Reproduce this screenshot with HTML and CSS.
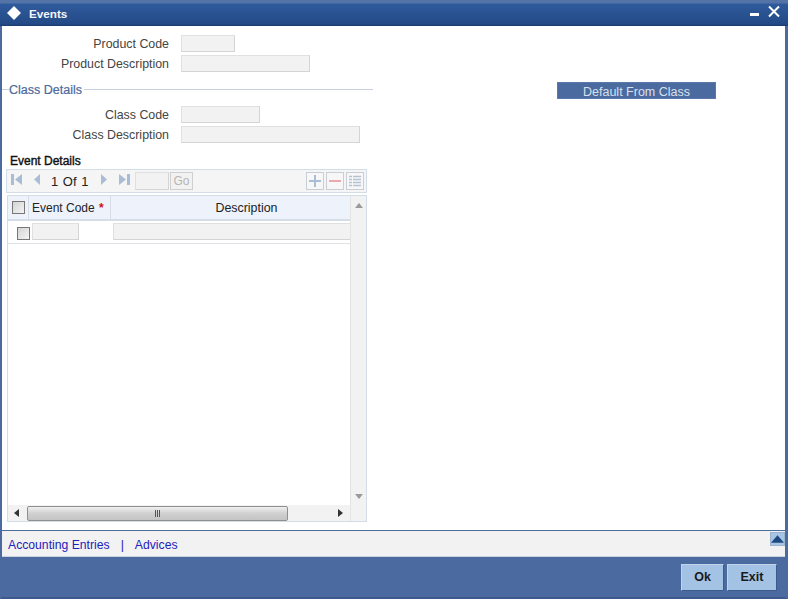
FILE: index.html
```html
<!DOCTYPE html>
<html lang="en">
<head>
<meta charset="utf-8">
<title>Events</title>
<link rel="stylesheet" href="styles.css">
</head>
<body>
<div class="window">
  <header class="titlebar">
    <svg class="logo" width="16" height="16" viewBox="0 0 16 16"><path d="M8 1 15 8 8 15 1 8Z" fill="#fff"/></svg>
    <span class="title">Events</span>
    <span class="winbtns">
      <svg width="12" height="12" viewBox="0 0 12 12"><rect x="1" y="7" width="9" height="3" fill="#fff"/></svg>
      <svg width="14" height="14" viewBox="0 0 14 14"><path d="M2 1.500 12 11.500M12 1.500 2 11.500" stroke="#fff" stroke-width="2" fill="none"/></svg>
    </span>
  </header>
  <main class="content">
    <div class="left">
      <div class="fields top">
        <div class="field"><label>Product Code</label><span class="input w54"></span></div>
        <div class="field"><label>Product Description</label><span class="input w129"></span></div>
      </div>
      <div class="legend"><span>Class Details</span></div>
      <div class="fields">
        <div class="field"><label>Class Code</label><span class="input w79"></span></div>
        <div class="field"><label>Class Description</label><span class="input w179"></span></div>
      </div>
      <h2 class="section">Event Details</h2>
      <div class="toolbar">
        <svg class="nav first" width="13" height="13" viewBox="0 0 13 13"><path d="M1 1h3v11H1zM12 1v11L5 6.500z" fill="#a9bdd6"/></svg>
        <svg class="nav prev" width="10" height="13" viewBox="0 0 10 13"><path d="M8 1v11L2 6.500z" fill="#a9bdd6"/></svg>
        <span class="pager">1 Of 1</span>
        <svg class="nav next" width="10" height="13" viewBox="0 0 10 13"><path d="M2 1v11l6-5.500z" fill="#a9bdd6"/></svg>
        <svg class="nav last" width="13" height="13" viewBox="0 0 13 13"><path d="M1 1v11l7-5.500zM9 1h3v11H9z" fill="#a9bdd6"/></svg>
        <span class="input pageinput"></span>
        <span class="go">Go</span>
        <span class="tools">
          <span class="tool"><svg width="14" height="14" viewBox="0 0 14 14"><path d="M1 7h12M7 1v12" stroke="#a9bdd6" stroke-width="2"/></svg></span>
          <span class="tool"><svg width="14" height="14" viewBox="0 0 14 14"><path d="M1 7h12" stroke="#eba9ad" stroke-width="2"/></svg></span>
          <span class="tool"><svg width="14" height="14" viewBox="0 0 14 14"><path d="M1 2.500h3M5 2.500h8M1 5.500h3M5 5.500h8M1 8.500h3M5 8.500h8M1 11.500h3M5 11.500h8" stroke="#b5c2d6" stroke-width="1.500"/></svg></span>
        </span>
      </div>
      <div class="grid">
        <div class="grid-main">
          <div class="grid-view">
            <div class="thead">
              <div class="th th-check"><span class="check"></span></div>
              <div class="th th-code">Event Code <b class="req">*</b></div>
              <div class="th th-desc">Description</div>
            </div>
            <div class="tr">
              <span class="check row"></span>
              <span class="input cellcode"></span>
              <span class="input celldesc"></span>
            </div>
          </div>
          <div class="hscroll">
            <svg width="6" height="8" viewBox="0 0 6 8"><path d="M5 0v8L0 4z" fill="#333"/></svg>
            <div class="hthumb"><i></i><i></i><i></i></div>
            <svg width="6" height="8" viewBox="0 0 6 8"><path d="M1 0v8l5-4z" fill="#333"/></svg>
          </div>
        </div>
        <div class="vscroll">
          <svg width="8" height="5" viewBox="0 0 8 5"><path d="M4 0l4 5H0z" fill="#9a9a9a"/></svg>
          <svg width="8" height="5" viewBox="0 0 8 5"><path d="M0 0h8L4 5z" fill="#9a9a9a"/></svg>
        </div>
      </div>
    </div>
    <div class="right">
      <button class="default-btn" type="button">Default From Class</button>
    </div>
  </main>
  <div class="links">
    <a>Accounting Entries</a><span class="sep">|</span><a>Advices</a>
    <span class="collapse"><svg width="14" height="8" viewBox="0 0 14 8"><path d="M7 0l7 8H0z" fill="#1c4a80"/></svg></span>
  </div>
  <footer class="footer">
    <button class="action" type="button">Ok</button>
    <button class="action" type="button">Exit</button>
  </footer>
</div>
</body>
</html>
```
FILE: styles.css
```css
* { box-sizing: border-box; }
html, body { margin: 0; height: 100%; }
body { font-family: "Liberation Sans", Arial, sans-serif; font-size: 12.400px; color: #333; background: #fff; overflow: hidden; }
.window { width: 788px; height: 599px; display: flex; flex-direction: column; background: #4a6aa0; border-right: 3px solid #4a6aa0; border-left: 2px solid #4a6aa0; border-bottom: 2px solid #3c5a8c; }
.titlebar { height: 26px; margin: 0 -3px 0 -2px; flex: none; display: flex; align-items: center; padding: 0 4px 0 6px; background: linear-gradient(#5474a8 0, #5474a8 3px, #2f5a9c 4px, #234a86 24px, #1a3a6c 26px); color: #fff; }
.logo { margin-right: 7px; }
.title { font-weight: bold; font-size: 11.700px; color: #f4f6fa; }
.winbtns { margin-left: auto; display: flex; align-items: center; gap: 6px; margin-top: -3px; margin-right: 3px; }
.content { height: 504px; flex: none; background: #fff; display: flex; }
.left { width: 371px; flex: none; padding-top: 9px; }
.fields { display: flex; flex-direction: column; gap: 3px; }
.field { display: flex; align-items: center; height: 17px; color: #444; }
.field label { width: 167px; text-align: right; margin-right: 12px; }
.input { display: block; height: 17px; background: #f2f2f2; border: 1px solid #e0e0e0; border-right-color: #d4d4d4; border-bottom-color: #d4d4d4; }
.w54 { width: 54px; }
.w129 { width: 129px; }
.w79 { width: 79px; }
.w179 { width: 179px; }
.legend { display: flex; align-items: center; height: 17px; margin: 9px 0 8px 0; }
.legend::before { content: ""; width: 7px; height: 1px; background: #c8d2de; }
.legend::after { content: ""; flex: 1; height: 1px; background: #c8d2de; margin-left: 2px; }
.legend span { color: #4a6a9c; font-weight: normal; font-size: 12.500px; -webkit-text-stroke: 0.200px #4a6a9c; }
.section { margin: 10px 0 0 8px; height: 16px; font-size: 12px; line-height: 17px; color: #111; font-weight: normal; -webkit-text-stroke: 0.400px #111; }
.toolbar { margin: 0 0 0 4px; width: 361px; height: 24px; background: #f5f5f5; border: 1px solid #d3dde8; display: flex; align-items: center; padding-left: 3px; position: relative; }
.nav { flex: none; margin-top: -3px; }
.prev { margin-left: 9px; }
.pager { margin-left: 9px; font-size: 13px; color: #222; word-spacing: 1px; width: 44px; white-space: nowrap; }
.next { margin-left: 4px; }
.last { margin-left: 9px; }
.pageinput { margin-left: 4px; width: 34px; height: 18px; }
.go { margin-left: 1px; width: 23px; height: 18px; border: 1px solid #cfcfcf; background: #f2f2f2; color: #b5b5b5; text-align: center; line-height: 17px; font-size: 12px; }
.tools { margin-left: auto; margin-right: 2px; display: flex; gap: 2px; }
.tool { width: 18px; height: 18px; border: 1px solid #c9ced6; background: #f7f7f7; display: flex; align-items: center; justify-content: center; }
.grid { margin: 2px 0 0 5px; width: 360px; height: 327px; border: 1px solid #d3dde8; display: flex; }
.grid-main { width: 342px; flex: none; display: flex; flex-direction: column; }
.grid-view { flex: 1; overflow: hidden; }
.thead { height: 25px; display: flex; background: #eef2fb; border-bottom: 2px solid #d5dde8; }
.th { display: flex; align-items: center; color: #222; height: 23px; font-size: 12px; }
.th-check { width: 21px; justify-content: center; border-right: 1px solid #d5dde8; }
.th-code { width: 82px; padding-left: 3px; border-right: 1px solid #d5dde8; white-space: pre; }
.th-desc { flex: 1; justify-content: center; padding-left: 32px; font-size: 12.400px; }
.req { color: #d01020; font-weight: bold; margin-left: 1px; }
.check { display: block; width: 13px; height: 13px; border: 1px solid #777; background: linear-gradient(135deg, #d4d4d4, #f4f4f4); }
.tr { height: 23px; position: relative; display: flex; align-items: center; border-bottom: 1px solid #dfe3e8; }
.check.row { margin: 3px 0 0 9px; }
.cellcode { width: 48px; margin: 0 0 2px 2px; height: 17px; }
.celldesc { width: 240px; margin: 0 0 2px 34px; height: 17px; border-right: 0; }
.hscroll { height: 16px; flex: none; display: flex; align-items: center; background: #f2f2f2; padding: 0 7px 0 6px; }
.hthumb { width: 261px; height: 15px; margin: 0 auto 0 7px; border: 1px solid #8f8f8f; border-radius: 2px; background: linear-gradient(#f0f0f0, #d0d0d0 50%, #c4c4c4); display: flex; align-items: center; justify-content: center; gap: 1px; }
.hthumb i { width: 1px; height: 7px; background: #555; }
.vscroll { flex: 1; background: #f2f2f2; border-left: 1px solid #e4e4e4; display: flex; flex-direction: column; justify-content: space-between; align-items: center; padding: 7px 0 22px; }
.right { flex: 1; padding: 56px 0 0 184px; }
.default-btn { display: block; width: 159px; height: 17px; padding: 3px 0 0; background: #4a6aa0; border: 1px solid #5a78aa; color: #d8e0ec; font: 12.500px "Liberation Sans", Arial, sans-serif; line-height: 13px; }
.links { height: 27px; flex: none; background: #f2f2f2; border-top: 1px solid #4a6aa0; border-bottom: 1px solid #c8d4e4; display: flex; align-items: center; padding: 2px 0 0 6px; position: relative; }
.links a { color: #2222bb; font-size: 12.200px; }
.sep { color: #2222bb; margin: 0 11px; }
.collapse { position: absolute; right: 0; top: 1px; width: 15px; height: 14px; background: #a8c4e4; border: 1px solid #9cb4d0; display: flex; align-items: center; justify-content: center; }
.footer { flex: 1; display: flex; justify-content: flex-end; align-items: center; gap: 3px; padding: 0 8px 0 0; }
.action { width: 43px; height: 27px; padding: 0; background: #a4c2e4; border: 1px solid #3c5a8c; border-top-color: #c4d4e8; border-left-color: #c4d4e8; color: #1a1a1a; font: bold 12.500px "Liberation Sans", Arial, sans-serif; }
.action:last-child { width: 50px; }
```
